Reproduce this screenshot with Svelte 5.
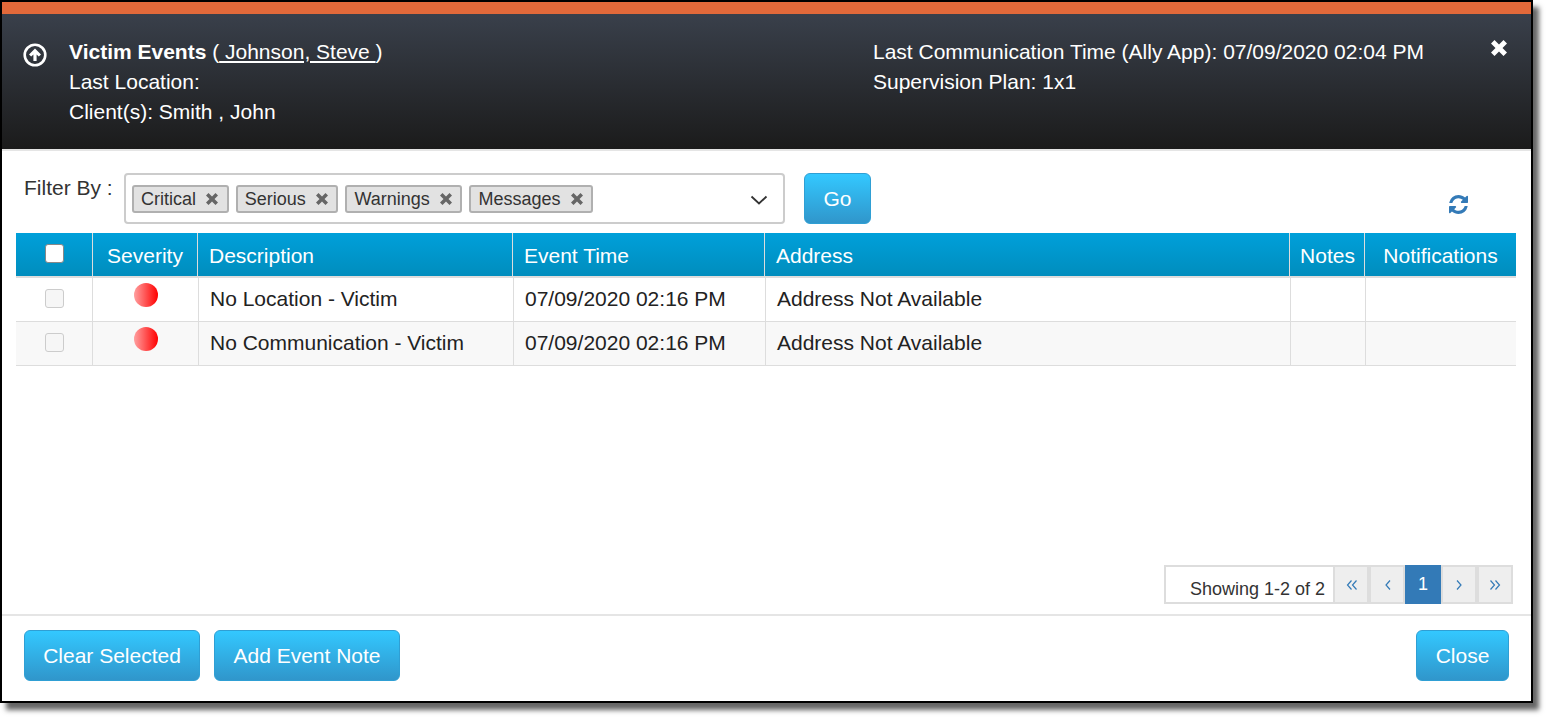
<script lang="ts">
	const filters = ['Critical', 'Serious', 'Warnings', 'Messages'];
	const events = [
		{ description: 'No Location - Victim', time: '07/09/2020 02:16 PM', address: 'Address Not Available' },
		{ description: 'No Communication - Victim', time: '07/09/2020 02:16 PM', address: 'Address Not Available' }
	];
</script>

<div class="page-wrap">
<div class="dialog">
	<header>
		<div class="accent"></div>
		<div class="head-main">
			<svg class="up-icon" viewBox="0 0 24 24" width="24" height="24">
				<circle cx="12" cy="12" r="10.3" fill="none" stroke="#fff" stroke-width="2.6" />
				<path d="M12 5.6 L18 11.6 L15.8 13.6 L13.6 11.4 V18 H10.4 V11.4 L8.2 13.6 L6 11.6 Z" fill="#fff" />
			</svg>
			<div class="head-left">
				<div><strong>Victim Events</strong> (<u>&nbsp;Johnson, Steve&nbsp;</u>)</div>
				<div>Last Location:</div>
				<div>Client(s): Smith , John</div>
			</div>
			<div class="head-right">
				<div>Last Communication Time (Ally App): 07/09/2020 02:04 PM</div>
				<div>Supervision Plan: 1x1</div>
			</div>
			<svg class="close-x" viewBox="0 0 18 18" width="18" height="18">
				<path d="M4.5 1 L9 5.500 L13.500 1 L17 4.500 L12.500 9 L17 13.500 L13.500 17 L9 12.500 L4.500 17 L1 13.500 L5.500 9 L1 4.500 Z" fill="#fff" />
			</svg>
		</div>
	</header>

	<div class="body">
		<div class="filter-row">
			<span class="filter-label">Filter By :</span>
			<div class="select">
				{#each filters as f}
					<span class="chip">{f}
						<svg viewBox="0 0 14 14" width="14" height="14">
							<path d="M3.500 1 L7 4.500 L10.500 1 L13 3.500 L9.500 7 L13 10.500 L10.500 13 L7 9.500 L3.500 13 L1 10.500 L4.500 7 L1 3.500 Z" fill="#666" />
						</svg>
					</span>
				{/each}
				<svg class="chevron" viewBox="0 0 18 10" width="18" height="10">
					<path d="M1.5 1.5 L9 8.5 L16.5 1.5" fill="none" stroke="#333" stroke-width="1.8" />
				</svg>
			</div>
			<button class="btn go">Go</button>
			<svg class="refresh" viewBox="0 0 1536 1536" width="19" height="19">
				<path fill="#337ab7" d="M1511 928q0 5-1 7-64 268-268 434.500T764 1536q-146 0-282.500-55T238 1324l-129 129q-19 19-45 19t-45-19-19-45V960q0-26 19-45t45-19h448q26 0 45 19t19 45-19 45L420 1142q71 66 161 102t187 36q134 0 250-65t186-179q11-17 53-117 8-23 30-23h192q13 0 22.500 9.500t9.500 22.500zm25-800v448q0 26-19 45t-45 19h-448q-26 0-45-19t-19-45 19-45l138-138q-148-137-349-137-134 0-250 65T332 500q-11 17-53 117-8 23-30 23H50q-13 0-22.500-9.500T18 608v-7q65-268 270-434.500T768 0q146 0 284 55.500T1297 212l130-129q19-19 45-19t45 19 19 45z" />
			</svg>
		</div>

		<div class="grid head-row">
			<div class="cell center"><span class="check on"></span></div>
			<div class="cell center">Severity</div>
			<div class="cell">Description</div>
			<div class="cell">Event Time</div>
			<div class="cell">Address</div>
			<div class="cell center notes">Notes</div>
			<div class="cell center">Notifications</div>
		</div>
		{#each events as e, i}
			<div class="grid row" class:alt={i % 2 === 1}>
				<div class="cell center"><span class="check"></span></div>
				<div class="cell center"><span class="dot"></span></div>
				<div class="cell">{e.description}</div>
				<div class="cell">{e.time}</div>
				<div class="cell">{e.address}</div>
				<div class="cell"></div>
				<div class="cell"></div>
			</div>
		{/each}

		<div class="pager">
			<span class="showing">Showing 1-2 of 2</span>
			<span class="page nudge">
				<svg viewBox="0 0 12 12" width="12" height="12"><path d="M5.5 1.500 L1.500 6 L5.500 10.500 M10.500 1.500 L6.500 6 L10.500 10.500" fill="none" stroke="#337ab7" stroke-width="1.200" /></svg>
			</span>
			<span class="page nudge">
				<svg viewBox="0 0 12 12" width="12" height="12"><path d="M8 1.500 L4 6 L8 10.500" fill="none" stroke="#337ab7" stroke-width="1.200" /></svg>
			</span>
			<span class="page active">1</span>
			<span class="page">
				<svg viewBox="0 0 12 12" width="12" height="12"><path d="M4 1.500 L8 6 L4 10.500" fill="none" stroke="#337ab7" stroke-width="1.200" /></svg>
			</span>
			<span class="page">
				<svg viewBox="0 0 12 12" width="12" height="12"><path d="M1.500 1.500 L5.500 6 L1.500 10.500 M6.500 1.500 L10.500 6 L6.500 10.500" fill="none" stroke="#337ab7" stroke-width="1.200" /></svg>
			</span>
		</div>
	</div>

	<footer>
		<button class="btn clear">Clear Selected</button>
		<button class="btn add">Add Event Note</button>
		<button class="btn close">Close</button>
	</footer>
</div>
</div>

<style>
	:global(body) {
		margin: 0;
		background: #fff;
		font-family: 'Liberation Sans', Arial, sans-serif;
		color: #222;
	}

	.page-wrap {
		height: 718px;
		overflow: hidden;
	}

	.dialog {
		box-sizing: border-box;
		width: 1533px;
		height: 703px;
		border: 2px solid #000;
		background: #fff;
		display: flex;
		flex-direction: column;
		box-shadow: 6px 7px 5px #666;
	}

	header {
		box-sizing: border-box;
		height: 149px;
		flex: none;
		border-bottom: 2px solid #e5e5e5;
		background: linear-gradient(#3c434f, #1b1b1b);
		color: #fff;
		font-size: 21px;
		line-height: 30px;
	}

	.accent {
		height: 12px;
		background: #e2693a;
	}

	.head-main {
		display: flex;
		padding: 23px 21px 0 21px;
		position: relative;
	}

	.up-icon {
		margin-top: 6px;
		margin-right: 22px;
		flex: none;
	}

	.head-left {
		width: 804px;
	}

	.head-right {
		flex: 1;
	}

	.close-x {
		margin-top: 2px;
		margin-right: 2px;
		flex: none;
	}

	.body {
		flex: 1;
		display: flex;
		flex-direction: column;
		padding: 22px 14px 0;
		border-bottom: 2px solid #e5e5e5;
		font-size: 21px;
	}

	.filter-row {
		display: flex;
		align-items: flex-start;
		height: 60px;
		padding-left: 8px;
	}

	.filter-label {
		width: 100px;
		line-height: 30px;
		color: #333;
	}

	.select {
		box-sizing: border-box;
		width: 661px;
		height: 51px;
		border: 2px solid #ccc;
		border-radius: 4px;
		display: flex;
		align-items: center;
		gap: 7px;
		padding-left: 6px;
		position: relative;
	}

	.chip {
		box-sizing: border-box;
		height: 28px;
		display: inline-flex;
		align-items: center;
		gap: 9px;
		padding: 1px 7.7px 0 7px;
		background: #e2e2e2;
		border: 2px solid #b0b0b0;
		border-radius: 3px;
		font-size: 18px;
		color: #333;
	}

	.chevron {
		position: absolute;
		right: 15px;
		top: 20px;
	}

	.btn {
		box-sizing: border-box;
		height: 51px;
		border: 1px solid #2f9fd4;
		border-radius: 6px;
		background: linear-gradient(#33c8ff, #3096cb);
		color: #fff;
		font-family: inherit;
		font-size: 21px;
		padding: 0;
	}

	.go {
		width: 67px;
		margin-left: 19px;
	}

	.refresh {
		margin-left: 578px;
		margin-top: 22px;
	}

	.grid {
		display: grid;
		box-sizing: border-box;
		width: 1500px;
		flex: none;
	}

	.head-row {
		grid-template-columns: 76px 105px 315px 252px 525px 75px 152px;
		height: 45px;
		border-bottom: 2px solid #ddd;
		background: linear-gradient(#00a0da, #008dbd);
		color: #fff;
	}

	.head-row .cell {
		border-left: 1px solid #ddd;
		padding-left: 11px;
		padding-top: 2px;
	}

	.head-row .cell:first-child {
		border-left: 0;
		padding-left: 0;
	}

	.head-row .cell.center {
		padding-left: 0;
	}

	.head-row .cell.notes {
		padding-left: 1px;
	}

	.row {
		grid-template-columns: 76px 106px 315px 252px 525px 75px 151px;
		height: 44px;
		border-bottom: 1px solid #ddd;
	}

	.row.alt {
		background: #f8f8f8;
	}

	.row .cell {
		border-left: 1px solid #ddd;
		padding-left: 11px;
		padding-bottom: 2px;
	}

	.row .cell:first-child {
		border-left: 0;
		padding-left: 0;
	}

	.row .cell.center {
		padding-left: 0;
	}

	.cell {
		box-sizing: border-box;
		display: flex;
		align-items: center;
		white-space: nowrap;
	}

	.cell.center {
		justify-content: center;
	}

	.check {
		box-sizing: border-box;
		width: 19px;
		height: 19px;
		border: 1px solid #ccc;
		border-radius: 3px;
		background: #f6f6f6;
	}

	.check.on {
		background: #fff;
		border-color: #888;
		margin-top: -5px;
	}

	.dot {
		width: 24px;
		height: 24px;
		border-radius: 50%;
		background: linear-gradient(to right, #ffa0a0, #ff0000);
		margin-top: -7px;
	}

	.pager {
		margin-top: auto;
		margin-bottom: 10px;
		display: flex;
		align-self: flex-end;
		margin-right: 4px;
		height: 39px;
	}

	.showing {
		box-sizing: border-box;
		width: 169px;
		border: 2px solid #ddd;
		border-right: 0;
		padding: 11px 8px 0 0;
		text-align: right;
		font-size: 18px;
		line-height: 22px;
		color: #333;
	}

	.page {
		box-sizing: border-box;
		width: 36px;
		display: flex;
		align-items: center;
		justify-content: center;
		background: #eee;
		border: 2px solid #ddd;
	}

	.page.nudge {
		padding-left: 2px;
	}

	.page.active {
		background: #337ab7;
		border-color: #337ab7;
		color: #fff;
		font-size: 18px;
	}

	footer {
		display: flex;
		gap: 14px;
		padding: 14px 22px 20px 22px;
		height: 85px;
		box-sizing: border-box;
		flex: none;
	}

	.clear {
		width: 176px;
	}

	.add {
		width: 186px;
	}

	.close {
		width: 93px;
		margin-left: auto;
	}
</style>
